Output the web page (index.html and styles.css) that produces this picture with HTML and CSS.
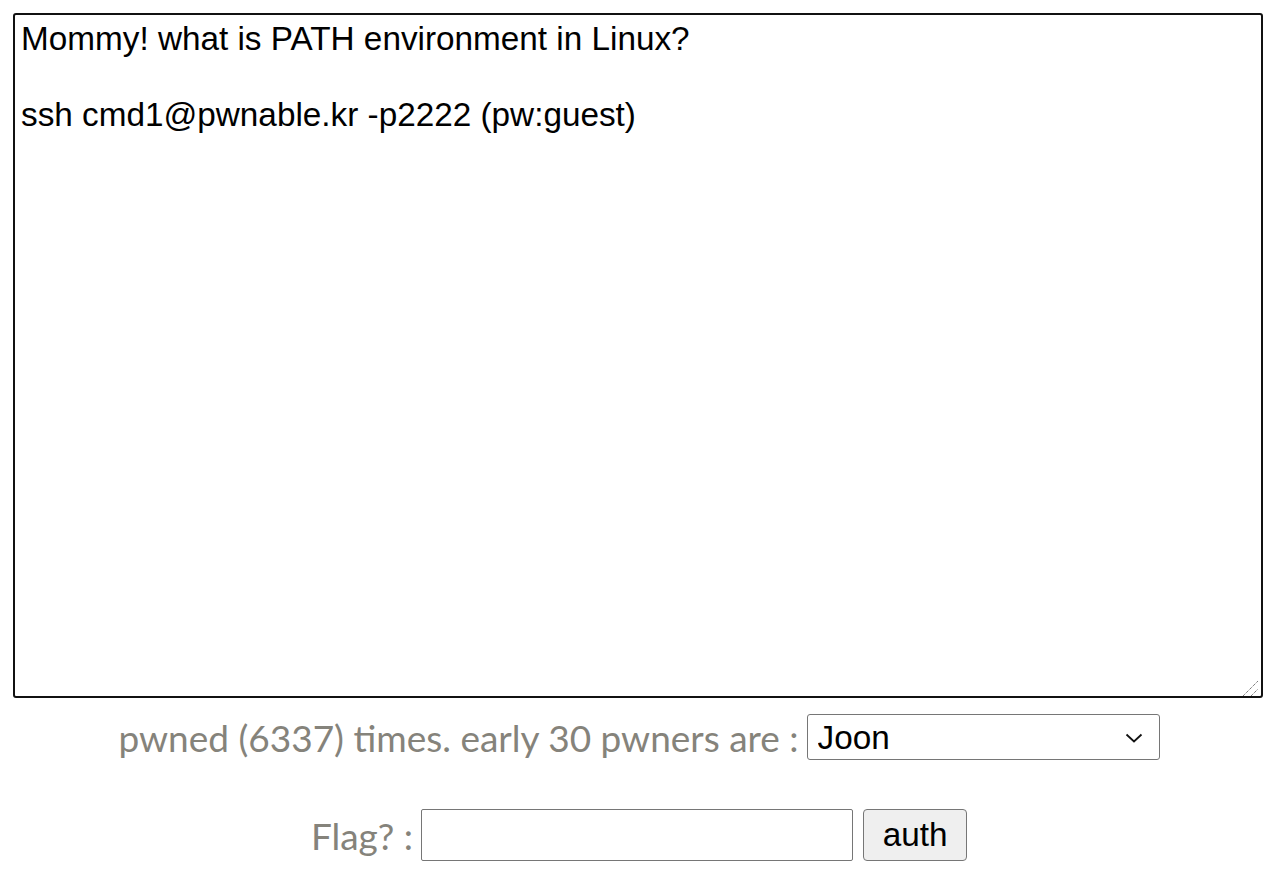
FILE: index.html
```html
<!DOCTYPE html>
<html>
<head>
<meta charset="utf-8">
<title>cmd1</title>
<link rel="stylesheet" href="styles.css">
</head>
<body>
<div class="box">
<textarea class="desc" readonly>Mommy! what is PATH environment in Linux?

ssh cmd1@pwnable.kr -p2222 (pw:guest)</textarea>
<svg class="grip" width="20" height="20" viewBox="0 0 20 20"><path d="M2 19 L17 4 M10 19 L17 12" stroke="#444" stroke-width="1" stroke-dasharray="1 1" fill="none"/></svg>
</div>
<div class="row stats">
  <span class="label">pwned (6337) times. early 30 pwners are :</span>
  <span class="selwrap">
    <select class="pwners"><option>Joon</option></select>
    <svg class="chev" width="18" height="10" viewBox="0 0 18 10"><path d="M1.5 1.5 L9 8.5 L16.5 1.5" stroke="#111" stroke-width="1.8" fill="none"/></svg>
  </span>
</div>
<div class="row flag">
  <span class="label">Flag? :</span>
  <input class="flaginput" type="text">
  <button class="auth">auth</button>
</div>
</body>
</html>
```
FILE: styles.css
```css
html, body {
  margin: 0;
  padding: 0;
  background: #fff;
}
.box {
  position: relative;
  padding: 13px 21px 0 13px;
}
.desc {
  display: block;
  box-sizing: border-box;
  width: 1250px;
  height: 685px;
  margin: 0;
  border: 2px solid #111;
  border-radius: 3px;
  padding: 5px 5px 5px 6px;
  font-family: "Liberation Sans", Arial, sans-serif;
  font-size: 33.3px;
  line-height: 38px;
  color: #000;
  resize: none;
  outline: none;
  overflow: hidden;
}
.grip {
  position: absolute;
  left: 1241px;
  top: 677px;
}
.row {
  display: flex;
  justify-content: center;
  align-items: center;
  padding-right: 6px;
}
.stats {
  margin-top: 16px;
  height: 46px;
}
.flag {
  margin-top: 49px;
  height: 52px;
}
.label {
  font-family: "Lato", "Open Sans", sans-serif;
  font-size: 37px;
  color: #85837b;
  margin-right: 8px;
}
.selwrap {
  position: relative;
  display: inline-block;
}
.pwners {
  -webkit-appearance: none;
  appearance: none;
  box-sizing: border-box;
  width: 353px;
  height: 46px;
  border: 1px solid #767676;
  border-radius: 3px;
  background: #fff;
  padding: 0 0 0 10px;
  font-family: "Liberation Sans", Arial, sans-serif;
  font-size: 33.3px;
  color: #000;
  display: block;
}
.chev {
  position: absolute;
  right: 17px;
  top: 19px;
  pointer-events: none;
}
.flaginput {
  box-sizing: border-box;
  width: 432px;
  height: 52px;
  border: 1px solid #767676;
  border-radius: 2px;
  padding: 0 5px;
  font-family: "Liberation Sans", Arial, sans-serif;
  font-size: 33.3px;
  margin: 0;
}
.auth {
  box-sizing: border-box;
  width: 104px;
  height: 52px;
  margin-left: 10px;
  border: 1px solid #767676;
  border-radius: 4px;
  background: #efefef;
  font-family: "Liberation Sans", Arial, sans-serif;
  font-size: 33.3px;
  color: #000;
  padding: 0;
}
```
